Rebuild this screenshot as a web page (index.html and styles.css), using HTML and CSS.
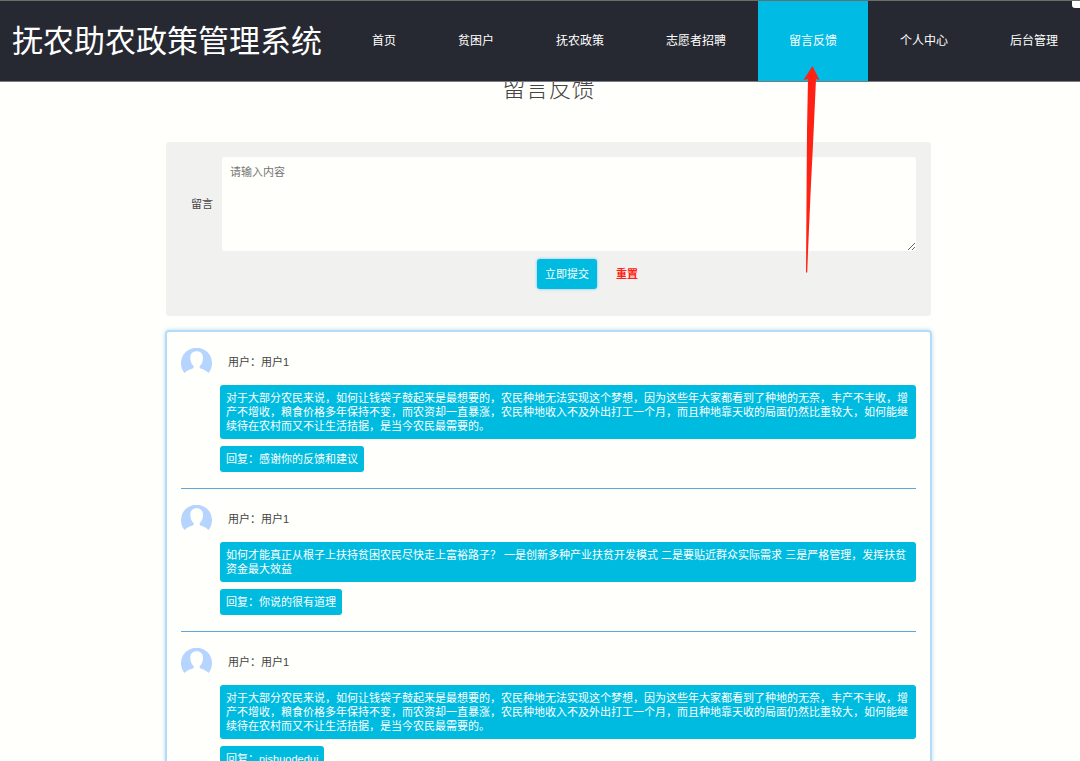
FILE: index.html
```html
<!DOCTYPE html>
<html lang="zh-CN">
<head>
<meta charset="utf-8">
<title>抚农助农政策管理系统</title>
<link rel="stylesheet" href="styles.css">
</head>
<body>
<svg class="symbols" aria-hidden="true">
  <symbol id="avatar" viewBox="0 1 31 31">
    <path fill="#b5d4ff" d="M3.5 26A15.500 15.500 0 1 1 27.500 26C25.500 23.500 22.500 22.500 19.500 21.500C18.500 21 18.300 20 18.900 19C21.200 17 22 14 22 10.500C22 6.500 19.500 4.200 15.700 4.200C11.800 4.200 9.300 6.500 9.300 10.500C9.300 14 10.200 17 12.500 19C13.100 20 12.800 21 11.800 21.500C8.500 22.500 5.500 23.500 3.500 26Z"/>
  </symbol>
</svg>

<header class="topbar">
  <div class="brand">抚农助农政策管理系统</div>
  <nav class="menu">
    <a href="#">首页</a>
    <a href="#">贫困户</a>
    <a href="#">抚农政策</a>
    <a href="#">志愿者招聘</a>
    <a href="#" class="active">留言反馈</a>
    <a href="#">个人中心</a>
    <a href="#">后台管理</a>
  </nav>
  <span class="corner"></span>
</header>

<svg class="pointer" viewBox="0 0 20 208" aria-hidden="true">
  <path fill="#ff2113" d="M12.500 0L19.500 14L16 13L13.700 64L10.700 124L8.500 174L7.200 206.500L6 206.500L7 64L8 13L3.500 14Z"/>
</svg>

<main class="page">
  <h1 class="page-title">留言反馈</h1>

  <form class="message-form">
    <label for="message">留言</label>
    <textarea id="message" placeholder="请输入内容"></textarea>
    <div class="actions">
      <button type="button" class="submit">立即提交</button>
      <button type="reset" class="reset">重置</button>
    </div>
  </form>

  <section class="messages">
    <article class="message">
      <div class="author"><svg class="avatar" aria-hidden="true"><use href="#avatar"/></svg><span>用户：用户1</span></div>
      <p class="bubble">对于大部分农民来说，如何让钱袋子鼓起来是最想要的，农民种地无法实现这个梦想，因为这些年大家都看到了种地的无奈，丰产不丰收，增产不增收，粮食价格多年保持不变，而农资却一直暴涨，农民种地收入不及外出打工一个月，而且种地靠天收的局面仍然比重较大，如何能继续待在农村而又不让生活拮据，是当今农民最需要的。</p>
      <p class="bubble reply">回复：感谢你的反馈和建议</p>
    </article>
    <article class="message">
      <div class="author"><svg class="avatar" aria-hidden="true"><use href="#avatar"/></svg><span>用户：用户1</span></div>
      <p class="bubble">如何才能真正从根子上扶持贫困农民尽快走上富裕路子？ 一是创新多种产业扶贫开发模式 二是要贴近群众实际需求 三是严格管理，发挥扶贫资金最大效益</p>
      <p class="bubble reply">回复：你说的很有道理</p>
    </article>
    <article class="message">
      <div class="author"><svg class="avatar" aria-hidden="true"><use href="#avatar"/></svg><span>用户：用户1</span></div>
      <p class="bubble">对于大部分农民来说，如何让钱袋子鼓起来是最想要的，农民种地无法实现这个梦想，因为这些年大家都看到了种地的无奈，丰产不丰收，增产不增收，粮食价格多年保持不变，而农资却一直暴涨，农民种地收入不及外出打工一个月，而且种地靠天收的局面仍然比重较大，如何能继续待在农村而又不让生活拮据，是当今农民最需要的。</p>
      <p class="bubble reply">回复：nishuodedui</p>
    </article>
  </section>
</main>
</body>
</html>
```
FILE: styles.css
```css
* {
  box-sizing: border-box;
}

body {
  margin: 0;
  padding-top: 74px;
  background: #fffffb;
  color: #444;
  font: 11px/14px "Liberation Sans", "Noto Sans CJK SC", sans-serif;
}

.symbols {
  display: none;
}

/* Top bar */
.topbar {
  position: fixed;
  top: 0;
  left: 0;
  right: 0;
  z-index: 2;
  display: flex;
  height: 82px;
  overflow: hidden;
  background: #272932;
  border-top: 1px solid #6a6e68;
  border-bottom: 1px solid #7a7b80;
}

.brand {
  flex: none;
  width: 341px;
  padding-left: 12px;
  color: #fff;
  font-size: 31px;
  line-height: 82px;
  white-space: nowrap;
}

.menu {
  display: flex;
  flex: none;
}

.menu a {
  padding: 0 31px;
  color: #fff;
  font-size: 12px;
  line-height: 80px;
  text-decoration: none;
  white-space: nowrap;
}

.menu .active {
  margin: 0 1px;
  background: #00bbe4;
}

.corner {
  position: absolute;
  top: -1px;
  right: 0;
  width: 8px;
  height: 8px;
  background: #fff;
  border-bottom-left-radius: 3px;
}

.pointer {
  position: absolute;
  top: 66px;
  left: 800px;
  z-index: 3;
  width: 20px;
  height: 208px;
}

/* Content */
.page {
  padding: 0 149px 40px 166px;
}

.page-title {
  margin: 0 0 38px;
  color: #444;
  font-size: 23px;
  font-weight: 300;
  line-height: 30px;
  text-align: center;
}

.message-form {
  display: grid;
  grid-template-columns: 32px 1fr;
  align-items: center;
  gap: 8px 9px;
  padding: 15px 15px 27px;
  background: #f1f1f0;
  border-radius: 3px;
}

.message-form label {
  text-align: right;
}

.message-form textarea {
  display: block;
  width: 100%;
  height: 94px;
  padding: 8px;
  background: #fffffb;
  border: 0;
  border-radius: 3px;
  color: #444;
  font: inherit;
  resize: vertical;
}

.message-form textarea::placeholder {
  color: #757575;
}

.actions {
  grid-column: 2;
  display: flex;
  padding-left: 315px;
}

.actions button {
  height: 30px;
  border: 0;
  border-radius: 3px;
  font: inherit;
}

.submit {
  padding: 0 8px;
  background: #00bbe0;
  box-shadow: 0 0 3px #6fc4f5;
  color: #fff;
}

.reset {
  padding: 0 19px;
  background: none;
  color: #ff2113;
}

.actions .reset {
  font-weight: 700;
}

/* Message list */
.messages {
  margin: 14px -1px 0;
  padding: 0 14px;
  border: 2px solid #b4dcf8;
  border-radius: 4px;
  box-shadow: 0 0 4px #b4dcf8;
}

.message {
  padding: 16px 0;
}

.message + .message {
  border-top: 1px solid #5ba9d6;
}

.author {
  display: flex;
  gap: 16px;
  line-height: 28px;
}

.avatar {
  width: 31px;
  height: 31px;
}

.bubble {
  width: fit-content;
  margin: 6px 0 0 39px;
  padding: 6px;
  background: #00bbe0;
  border-radius: 3px;
  color: #fff;
}

.reply {
  margin-top: 7px;
}
```
